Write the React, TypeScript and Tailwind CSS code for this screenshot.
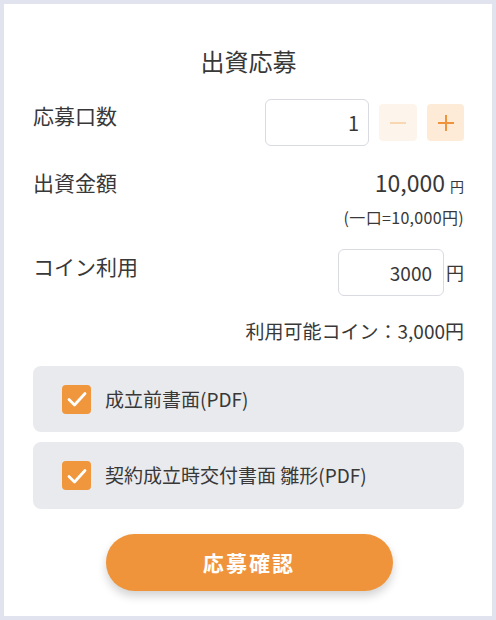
import React from "react";

function Check() {
  return (
    <div className="w-[29px] h-[29px] rounded-[4px] bg-[#f0963d] flex items-center justify-center shrink-0">
      <svg width="24" height="24" viewBox="0 0 24 24" fill="none">
        <path d="M4 12.5 L9.5 18 L20 6.5" stroke="#ffffff" strokeWidth="2.8" strokeLinecap="round" strokeLinejoin="round" />
      </svg>
    </div>
  );
}

export default function App() {
  return (
    <div
      className="w-[496px] h-[620px] bg-[#e1e3ee] p-[4px] text-[#383838]"
      style={{ fontFamily: '"Noto Sans CJK JP", "Noto Sans", sans-serif' }}
    >
      <div className="bg-white h-full pt-[41px] pl-[29px] pr-[28px] flex flex-col">
        <h1 className="text-center text-[24px] leading-[32px] font-normal">出資応募</h1>

        {/* 応募口数 */}
        <div className="mt-[22px] flex justify-between items-start">
          <div className="text-[21px] leading-[28px] mt-[2px]">応募口数</div>
          <div className="flex items-center gap-[10px]">
            <input
              readOnly
              value="1"
              className="w-[104px] h-[47px] border border-[#d9dae2] rounded-[6px] text-right pr-[9px] text-[20px] outline-none"
            />
            <div className="w-[38px] h-[37px] rounded-[4px] bg-[#fdf5ec] flex items-center justify-center">
              <svg width="18" height="18" viewBox="0 0 18 18">
                <path d="M1 9 H17" stroke="#f8d7b2" strokeWidth="2" />
              </svg>
            </div>
            <div className="w-[37px] h-[37px] rounded-[4px] bg-[#fdebd8] flex items-center justify-center">
              <svg width="18" height="18" viewBox="0 0 18 18">
                <path d="M1 9 H17 M9 1 V17" stroke="#f0943c" strokeWidth="2" />
              </svg>
            </div>
          </div>
        </div>

        {/* 出資金額 */}
        <div className="mt-[21px] flex justify-between items-start">
          <div className="text-[21px] leading-[30px]">出資金額</div>
          <div className="flex flex-col items-end">
            <div className="leading-[30px]">
              <span className="text-[23px]">10,000</span>
              <span className="text-[14px] ml-[5px]">円</span>
            </div>
            <div className="text-[16px] leading-[18px] mt-[7px] tracking-[0.02em]">(一口=10,000円)</div>
          </div>
        </div>

        {/* コイン利用 */}
        <div className="mt-[23px] flex justify-between items-start">
          <div className="text-[21px] leading-[28px] mt-[3px]">コイン利用</div>
          <div className="flex items-center">
            <input
              readOnly
              value="3000"
              className="w-[106px] h-[47px] border border-[#d9dae2] rounded-[6px] text-right pr-[11px] text-[19px] outline-none"
            />
            <span className="text-[18px] ml-[2px]">円</span>
          </div>
        </div>

        <div className="mt-[22px] text-right text-[19px] leading-[26px]">利用可能コイン：3,000円</div>

        {/* checkboxes */}
        <div className="mt-[22px] flex flex-col gap-[10px]">
          <div className="h-[66px] rounded-[8px] bg-[#e9eaee] flex items-center pl-[29px] gap-[14px]">
            <Check />
            <span className="text-[19px]">成立前書面(PDF)</span>
          </div>
          <div className="h-[67px] rounded-[8px] bg-[#e9eaee] flex items-center pl-[29px] gap-[14px]">
            <Check />
            <span className="text-[19px]">契約成立時交付書面 雛形(PDF)</span>
          </div>
        </div>

        <div className="mt-[25px] flex justify-center">
          <button className="w-[287px] h-[57px] rounded-full bg-[#ef943b] text-white text-[21px] font-bold tracking-[0.1em] shadow-[0_5px_10px_rgba(0,0,0,0.18)] ml-[1px]">
            応募確認
          </button>
        </div>
      </div>
    </div>
  );
}
